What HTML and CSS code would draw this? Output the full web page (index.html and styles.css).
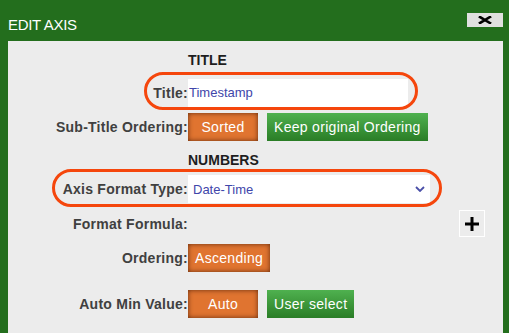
FILE: index.html
```html
<!DOCTYPE html>
<html lang="en">
<head>
<meta charset="UTF-8">
<title>Edit Axis</title>
<meta name="viewport" content="width=device-width, initial-scale=1.0">
<link rel="stylesheet" href="styles.css">
</head>
<body>

<div class="dialog">
  <div class="dialog-header">
    <span class="dialog-title">EDIT AXIS</span>
    <div class="close-button">
      <svg width="14" height="8" viewBox="0 0 14 8">
        <path d="M2 1 L12 7 M12 1 L2 7" stroke="#000" stroke-width="2.6" stroke-linecap="square"/>
      </svg>
    </div>
  </div>

  <div class="dialog-body">
    <div class="section-head first">TITLE</div>

    <div class="row">
      <div class="ring ring-title"></div>
      <label class="label">Title:</label>
      <div class="text-input">Timestamp</div>
    </div>

    <div class="row gap-small">
      <label class="label">Sub-Title Ordering:</label>
      <div class="btn orange fixed">Sorted</div>
      <div class="btn green">Keep original Ordering</div>
    </div>

    <div class="section-head">NUMBERS</div>

    <div class="row">
      <div class="ring ring-format"></div>
      <label class="label">Axis Format Type:</label>
      <div class="select-box">
        <span>Date-Time</span>
        <svg width="10" height="6" viewBox="0 0 10 6">
          <path d="M1 1 L5 5 L9 1" fill="none" stroke="#4a4fa8" stroke-width="1.8"/>
        </svg>
      </div>
    </div>

    <div class="row formula-row">
      <label class="label">Format Formula:</label>
      <div class="plus-button">
        <svg width="16" height="16" viewBox="0 0 16 16">
          <path d="M8 1 V15 M1 8 H15" stroke="#000" stroke-width="3"/>
        </svg>
      </div>
    </div>

    <div class="row">
      <label class="label">Ordering:</label>
      <div class="btn orange">Ascending</div>
    </div>

    <div class="row gap-large">
      <label class="label">Auto Min Value:</label>
      <div class="btn orange fixed">Auto</div>
      <div class="btn green">User select</div>
    </div>
  </div>
</div>

</body>
</html>
```

FILE: styles.css
```css
body {
  margin: 0;
  font-family: "Liberation Sans", Arial, sans-serif;
  background-color: #236e1d;
  overflow: hidden;
}

.dialog {
  width: 509px;
  height: 333px;
  background-color: #236e1d;
  padding: 0 6px 0 8px;
  box-sizing: border-box;
}

.dialog-header {
  height: 41px;
  display: flex;
  align-items: flex-start;
  justify-content: space-between;
  box-sizing: border-box;
}

.dialog-title {
  color: #fff;
  font-size: 15px;
  letter-spacing: -0.3px;
  margin-top: 16px;
}

.close-button {
  width: 36px;
  height: 14px;
  background-color: #e0e0e0;
  display: flex;
  align-items: center;
  justify-content: center;
  margin-top: 13px;
}

.dialog-body {
  background-color: #ececec;
  height: 300px;
  padding-top: 11px;
  box-sizing: border-box;
}

.section-head {
  margin-top: 11px;
  margin-left: 180px;
  height: 16px;
  line-height: 16px;
  font-size: 14px;
  font-weight: bold;
  color: #1e1e1e;
}

.section-head.first {
  margin-top: 0;
}

.row {
  position: relative;
  display: flex;
  align-items: center;
  height: 28px;
  margin-top: 7px;
}

.section-head.first + .row {
  margin-top: 11px;
}

.gap-small {
  margin-top: 6px;
}

.gap-large {
  margin-top: 18px;
}

.formula-row {
  height: 27px;
}

.label {
  width: 180px;
  flex-shrink: 0;
  text-align: right;
  font-size: 14px;
  font-weight: bold;
  letter-spacing: 0.25px;
  color: #404040;
}

.text-input {
  width: 220px;
  height: 28px;
  background-color: #fff;
  color: #4046aa;
  font-size: 13px;
  line-height: 28px;
  padding-left: 1px;
  box-sizing: border-box;
}

.select-box {
  width: 242px;
  height: 28px;
  background-color: #fff;
  color: #4046aa;
  font-size: 13px;
  display: flex;
  align-items: center;
  justify-content: space-between;
  padding: 0 5px 0 5px;
  box-sizing: border-box;
}

.btn {
  height: 28px;
  line-height: 28px;
  padding: 0 7px;
  font-size: 14px;
  letter-spacing: 0.3px;
  color: #fff;
  text-align: center;
  box-sizing: border-box;
  cursor: pointer;
}

.btn.fixed {
  width: 70px;
}

.btn.orange {
  background-color: #e07430;
  box-shadow: inset 0 0 5px rgba(60, 20, 0, 0.75);
}

.btn.green {
  margin-left: 9px;
  background: linear-gradient(#4fb14f, #2a7d26);
}

.plus-button {
  width: 24px;
  height: 25px;
  border: 1px solid #fff;
  display: flex;
  align-items: center;
  justify-content: center;
  margin-left: auto;
  margin-right: 18px;
}

/* red annotation rings */
.ring {
  position: absolute;
  border: 3.5px solid #f5460c;
  border-radius: 20px;
  box-sizing: border-box;
  height: 38px;
  top: -6px;
}

.ring-title {
  left: 136px;
  width: 274px;
  top: -7px;
}

.ring-format {
  left: 44px;
  width: 390px;
}
```
